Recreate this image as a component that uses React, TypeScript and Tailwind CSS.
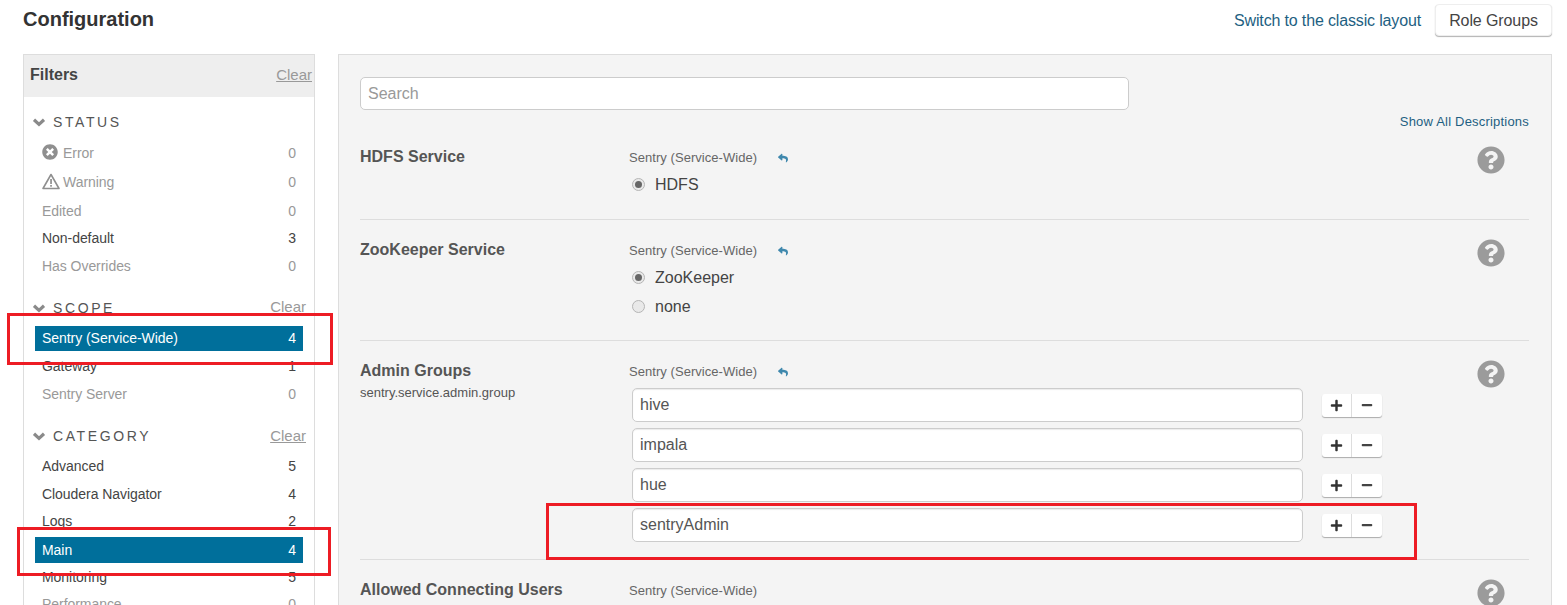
import React from "react";
import { FaMinus, FaPlus, FaQuestionCircle, FaReply, FaTimesCircle } from "react-icons/fa";

function Warn() {
  return (
    <svg width="18" height="17" viewBox="0 0 18 17" className="shrink-0">
      <path d="M9 1.5 L17 15.5 H1 Z" fill="none" stroke="#8f8f8f" strokeWidth="1.6" strokeLinejoin="round" />
      <rect x="8.2" y="6" width="1.7" height="5" fill="#8f8f8f" />
      <rect x="8.2" y="12" width="1.7" height="1.7" fill="#8f8f8f" />
    </svg>
  );
}

function Chevron() {
  return (
    <svg width="14" height="9" viewBox="0 0 14 9" className="shrink-0">
      <path d="M2 1.8 L7 6.4 L12 1.8" fill="none" stroke="#8a8a8a" strokeWidth="3.2" />
    </svg>
  );
}

function Heading({ title, clear, muted }: { title: string; clear?: boolean; muted?: boolean }) {
  return (
    <div className="flex items-center h-[28px] pl-[8px] pr-[8px]">
      <Chevron />
      <span className="ml-[7px] text-[14px] tracking-[2.6px] text-[#555]">{title}</span>
      {clear && (
        <span className={`ml-auto text-[15px] text-[#999] ${muted ? "-mt-[2px]" : "underline"}`}>Clear</span>
      )}
    </div>
  );
}

function Row({
  label,
  n,
  tone = "dim",
  icon,
  h = "h-[28px]",
}: {
  label: string;
  n: number;
  tone?: "dim" | "on" | "sel";
  icon?: React.ReactNode;
  h?: string;
}) {
  const color = tone === "dim" ? "text-[#999]" : tone === "on" ? "text-[#444]" : "text-white";
  const bg = tone === "sel" ? "bg-[#006f9b]" : "";
  return (
    <div className={`flex items-center ${h} ${bg} ${color} px-[7px] text-[14px] tracking-[-0.05px]`}>
      {icon}
      <span>{label}</span>
      <span className="ml-auto">{n}</span>
    </div>
  );
}

function Scope() {
  return (
    <div className="flex items-center h-[20px] mt-[1px] text-[13px] tracking-[0.05px] text-[#666]">
      <span>Sentry (Service-Wide)</span>
    </div>
  );
}

function ScopeReset() {
  return (
    <div className="flex items-center h-[20px] mt-[1px] text-[13px] tracking-[0.05px] text-[#666]">
      <span className="w-[148px]">Sentry (Service-Wide)</span>
      <FaReply className="text-[#3f88ad] w-[12px] h-[10px] -mt-[1px]" />
    </div>
  );
}

function Radio({ label, on }: { label: string; on?: boolean }) {
  return (
    <div className="flex items-center h-[29px] pl-[3px]">
      <span className="w-[13px] h-[13px] rounded-full border border-[#b5b5b5] bg-[#e9e9e9] flex items-center justify-center shrink-0">
        {on && <span className="w-[7px] h-[7px] rounded-full bg-[#666]" />}
      </span>
      <span className="ml-[10px] text-[16px] text-[#444]">{label}</span>
    </div>
  );
}

function Help() {
  return <FaQuestionCircle className="text-[#9b9b9b] w-[28px] h-[28px] shrink-0" />;
}

function Setting({
  title,
  sub,
  children,
  last,
  size = "",
}: {
  title: string;
  sub?: string;
  children: React.ReactNode;
  last?: boolean;
  size?: string;
}) {
  return (
    <div className={`flex ${last ? "" : "border-b border-[#ddd]"} ${size}`}>
      <div className="w-[269px] shrink-0">
        <div className="text-[16px] font-bold text-[#555] leading-[20px]">{title}</div>
        {sub && <div className="text-[13px] text-[#555] leading-[24px]">{sub}</div>}
      </div>
      <div className="w-[753px] shrink-0">{children}</div>
      <div className="flex-1 flex justify-center -mt-[1px] pl-[71px]">
        <Help />
      </div>
    </div>
  );
}

function GroupInput({ value }: { value: string }) {
  return (
    <div className="flex items-center h-[34px] mb-[6px] ml-[3px]">
      <input
        readOnly
        value={value}
        className="w-[671px] h-[34px] bg-white border border-[#ccc] rounded-[5px] px-[7px] text-[16px] text-[#555] shadow-[inset_0_1px_1px_rgba(0,0,0,0.08)] outline-none"
      />
      <div className="ml-[19px] flex h-[23px] w-[60px] bg-white rounded-[3px] shadow-[0_1px_1px_rgba(0,0,0,0.3)]">
        <span className="w-[30px] flex items-center justify-center border-r border-[#ddd]">
          <FaPlus className="text-[#333] w-[13px] h-[13px]" />
        </span>
        <span className="flex-1 flex items-center justify-center">
          <FaMinus className="text-[#444] w-[12px] h-[12px]" />
        </span>
      </div>
    </div>
  );
}

export default function App() {
  return (
    <div
      className="relative w-[1567px] h-[605px] overflow-hidden bg-white text-[#444]"
      style={{ fontFamily: '"Liberation Sans", Arial, sans-serif' }}
    >
      <div className="flex items-center justify-between h-[38px] pl-[23px] pr-[15px] pt-[2px]">
        <h1 className="text-[20px] font-bold text-[#333] -mt-[2px]">Configuration</h1>
        <div className="flex items-center">
          <span className="text-[16px] tracking-[-0.15px] text-[#1e5f82] mr-[14px] pt-[1px]">Switch to the classic layout</span>
          <span className="flex items-center justify-center w-[117px] h-[32px] pt-[1px] rounded-[4px] bg-white text-[16px] tracking-[-0.1px] text-[#444] border border-[#eee] shadow-[0_1px_1px_rgba(0,0,0,0.3)]">
            Role Groups
          </span>
        </div>
      </div>

      <div className="flex mt-[16px] pl-[23px]">
        <aside className="w-[292px] h-[560px] border border-[#ddd] shrink-0">
          <div className="flex items-center justify-between h-[42px] bg-[#eeeeee] pl-[6px] pr-[2px]">
            <span className="text-[16px] font-bold text-[#444] -mt-[2px]">Filters</span>
            <span className="text-[15px] text-[#999] underline -mt-[1px]">Clear</span>
          </div>
          <div className="px-[11px] pt-[11px]">
            <div className="-mx-[11px]">
              <Heading title="STATUS" />
            </div>
            <div className="mt-[2px]">
              <Row h="h-[30px]" label="Error" n={0} icon={<FaTimesCircle className="text-[#8f8f8f] w-[16px] h-[16px] mr-[5px] -mt-[2px]" />} />
              <Row h="h-[29px]" label="Warning" n={0} icon={<span className="mr-[3px] -mt-[2px]"><Warn /></span>} />
              <Row label="Edited" n={0} />
              <Row h="h-[27px]" label="Non-default" n={3} tone="on" />
              <Row label="Has Overrides" n={0} />
            </div>
            <div className="mt-[14px] -mx-[11px]">
              <Heading title="SCOPE" clear muted />
            </div>
            <div className="mt-[4px]">
              <Row h="h-[25px]" label="Sentry (Service-Wide)" n={4} tone="sel" />
              <div className="h-[1px]" />
              <Row label="Gateway" n={1} tone="on" />
              <Row label="Sentry Server" n={0} />
            </div>
            <div className="mt-[14px] -mx-[11px]">
              <Heading title="CATEGORY" clear />
            </div>
            <div className="mt-[2px]">
              <Row label="Advanced" n={5} tone="on" />
              <Row label="Cloudera Navigator" n={4} tone="on" />
              <Row h="h-[27px]" label="Logs" n={2} tone="on" />
              <div className="h-[2px]" />
              <Row h="h-[26px]" label="Main" n={4} tone="sel" />
              <Row label="Monitoring" n={5} tone="on" />
              <Row h="h-[26px]" label="Performance" n={0} />
            </div>
          </div>
        </aside>

        <main className="ml-[23px] w-[1214px] h-[560px] border border-[#ddd] bg-[#f4f4f4] pl-[21px] pr-[22px] pt-[22px]">
          <input
            readOnly
            placeholder="Search"
            className="block w-[769px] h-[33px] bg-white border border-[#ccc] rounded-[5px] px-[7px] text-[16px] placeholder:text-[#999] outline-none"
          />
          <div className="text-right text-[13px] tracking-[0.2px] text-[#1e5f82] mt-[4px] leading-[16px] mb-[17px]">
            Show All Descriptions
          </div>
          <Setting title="HDFS Service" size="h-[73px]">
            <ScopeReset />
            <div className="mt-[2px]">
              <Radio label="HDFS" on />
            </div>
          </Setting>
          <div className="h-[20px]" />
          <Setting title="ZooKeeper Service" size="h-[101px]">
            <ScopeReset />
            <div className="mt-[2px]">
              <Radio label="ZooKeeper" on />
              <Radio label="none" />
            </div>
          </Setting>
          <div className="h-[20px]" />
          <Setting title="Admin Groups" sub="sentry.service.admin.group" size="h-[199px]">
            <ScopeReset />
            <div className="mt-[6px]">
              <GroupInput value="hive" />
              <GroupInput value="impala" />
              <GroupInput value="hue" />
              <GroupInput value="sentryAdmin" />
            </div>
          </Setting>
          <div className="h-[20px]" />
          <Setting title="Allowed Connecting Users" last>
            <Scope />
          </Setting>
        </main>
      </div>

      <div className="absolute left-[7px] top-[313px] w-[326px] h-[52px] border-[3px] border-[#ed1c24]" />
      <div className="absolute left-[17px] top-[527px] w-[314px] h-[49px] border-[3px] border-[#ed1c24]" />
      <div className="absolute left-[546px] top-[503px] w-[871px] h-[57px] border-[3px] border-[#ed1c24]" />
    </div>
  );
}
